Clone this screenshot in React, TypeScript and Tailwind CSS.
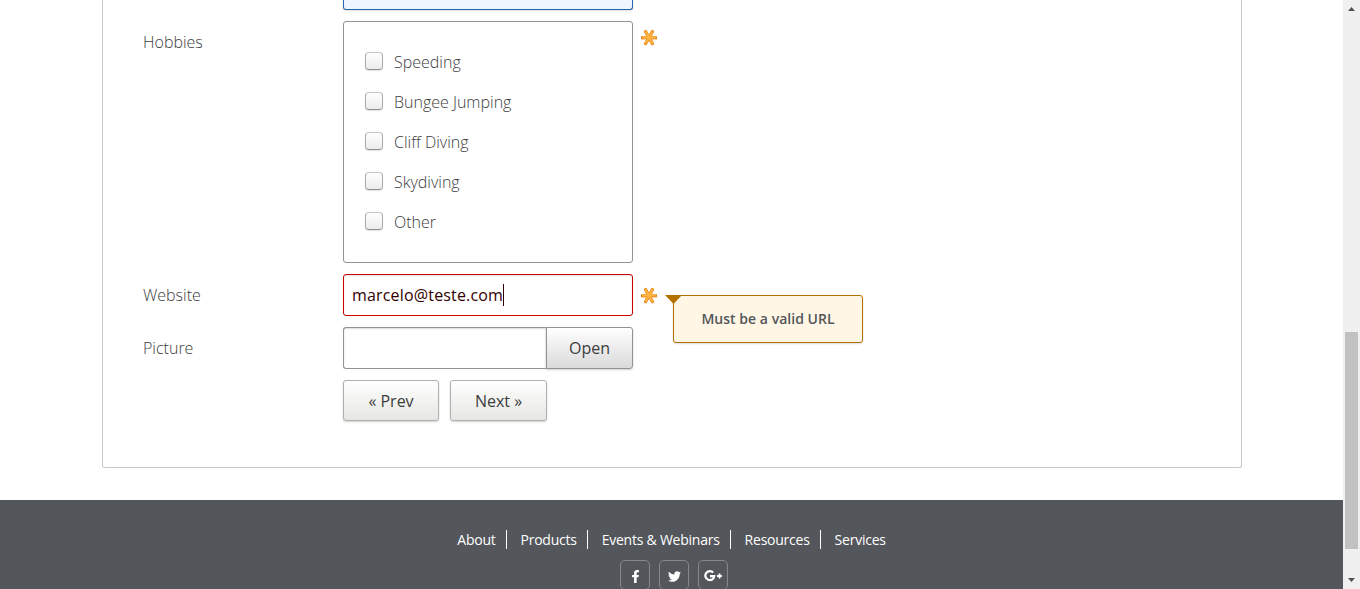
import { FaFacebookF, FaTwitter } from "react-icons/fa";

const hobbies = ["Speeding", "Bungee Jumping", "Cliff Diving", "Skydiving", "Other"];
const links = ["About", "Products", "Events & Webinars", "Resources", "Services"];

function Required({ className }: { className: string }) {
  return (
    <svg className={className} width="16" height="16" viewBox="0 0 16 16">
      <g stroke="#e88b1e" strokeWidth="3.2">
        <path d="M0 7.8h16" />
        <path d="M4.6 1.6l6.8 12M11.4 1.6L4.6 13.6" strokeLinecap="round" />
      </g>
      <g stroke="#ffb340" strokeWidth="2" strokeLinecap="round">
        <path d="M2 7.4h12M4.8 2l6.4 11M11.2 2L4.8 13" />
      </g>
    </svg>
  );
}

function Label({ children }: { children: string }) {
  return <div className="w-[200px] shrink-0 pt-[9px] text-base leading-6 font-light">{children}</div>;
}

export default function App() {
  return (
    <div className="flex h-[589px] w-[1360px] overflow-hidden bg-white font-['Open_Sans',sans-serif] text-[#3c3c3c]">
      <div className="flex w-[1343px] flex-col">
        <main className="ml-[102px] h-[468px] w-[1140px] rounded-b-[3px] border border-t-0 border-[#c8c8c8] pl-10">
          <div className="ml-[200px] h-[10px] w-[290px] rounded-b-[3px] border border-t-0 border-[#2364aa] bg-[#edf5ff] shadow-[0_1px_2px_#00000020]" />

          <div className="mt-[11px] flex">
            <Label>Hobbies</Label>
            <div className="flex h-[242px] w-[290px] flex-col rounded-[3px] border border-[#929292] pt-5 pl-[21px]">
              {hobbies.map((name) => (
                <label key={name} className="flex h-10 items-center text-base font-light">
                  <span className="mr-[11px] mb-0.5 h-[18px] w-[18px] rounded-[4px] border border-[#aaa] border-t-[#c6c6c6] border-b-[#929292] bg-gradient-to-b from-white to-[#ececec] shadow-[0_1px_1px_#00000020]" />
                  {name}
                </label>
              ))}
            </div>
            <Required className="mt-[9px] ml-2" />
          </div>

          <div className="mt-[11px] flex">
            <Label>Website</Label>
            <div className="flex h-[42px] w-[290px] items-center rounded-[3px] border border-[#cc0000] pl-2 text-base tracking-[0.17px] text-[#330000] shadow-[inset_0_1px_2px_#00000018]">
              marcelo@teste.com
              <span className="h-[22px] w-px bg-[#330000]" />
            </div>
            <Required className="mt-[14px] ml-2" />
            <div className="relative mt-[21px] ml-4 flex h-12 w-[190px] items-center justify-center rounded-[3px] border border-[#b37200] bg-[#fff6e5] text-sm font-semibold tracking-[0.03px] text-[#53565a] shadow-[0_1px_2px_#00000025]">
              <svg className="absolute -top-px -left-[9px]" width="17" height="9" viewBox="0 0 17 9">
                <path d="M0 0h17L8.5 9z" fill="#b37200" />
              </svg>
              Must be a valid URL
            </div>
          </div>

          <div className="-mt-4 flex">
            <Label>Picture</Label>
            <div className="flex h-[42px] w-[290px]">
              <div className="w-[203px] rounded-l-[3px] border border-r-0 border-[#929292] shadow-[inset_0_1px_2px_#00000025]" />
              <button className="w-[87px] rounded-r-[3px] border border-[#929292] bg-gradient-to-b from-white to-[#dadada] text-base shadow-[0_1px_2px_#00000030]">Open</button>
            </div>
          </div>

          <div className="mt-[11px] ml-[200px] flex gap-[11px]">
            <button className="h-[41px] w-24 rounded-[3px] border border-[#b0b0b0] bg-gradient-to-b from-white to-[#e6e6e3] text-base shadow-[0_1px_2px_#00000030]">« Prev</button>
            <button className="h-[41px] w-[97px] rounded-[3px] border border-[#b0b0b0] bg-gradient-to-b from-white to-[#e6e6e3] text-base shadow-[0_1px_2px_#00000030]">Next »</button>
          </div>
        </main>

        <footer className="mt-8 flex h-[89px] flex-col items-center bg-[#53565a] pt-[30px] text-white">
          <nav className="flex text-sm leading-[19px] tracking-[-0.24px]">
            {links.map((l) => (
              <a key={l} className="border-r border-white pr-[10px] pl-[14px] first:pl-0 last:border-0 last:pr-0">{l}</a>
            ))}
          </nav>
          <div className="mt-[11px] ml-1 flex gap-[9px]">
            <span className="flex h-[30px] w-[30px] items-center justify-center rounded-[5px] border border-[#858789] pt-0.5 pl-px"><FaFacebookF size={13} /></span>
            <span className="flex h-[30px] w-[30px] items-center justify-center rounded-[5px] border border-[#858789] pt-0.5 pl-px"><FaTwitter size={13} /></span>
            <span className="flex h-[30px] w-[30px] items-center justify-center rounded-[5px] border border-[#858789] pt-0.5">
              <svg width="18" height="14" viewBox="0 0 18 14" fill="none" stroke="white" strokeWidth="2.2">
                <path d="M9.2 3.6A4.5 4.5 0 1 0 10.3 7.2H6" />
                <path d="M13 7h5M15.5 4.5v5" strokeWidth="1.8" />
              </svg>
            </span>
          </div>
        </footer>
      </div>

      <aside className="flex w-[17px] flex-col items-center bg-[#f0f0f0]">
        <svg className="mt-[7px]" width="7" height="4" viewBox="0 0 7 4"><path d="M0 4h7L3.5 0z" fill="#505050" /></svg>
        <div className="mt-[321px] h-[217px] w-[13px] bg-[#c1c1c1]" />
        <svg className="mt-[29px]" width="7" height="4" viewBox="0 0 7 4"><path d="M0 0h7L3.5 4z" fill="#505050" /></svg>
      </aside>
    </div>
  );
}
